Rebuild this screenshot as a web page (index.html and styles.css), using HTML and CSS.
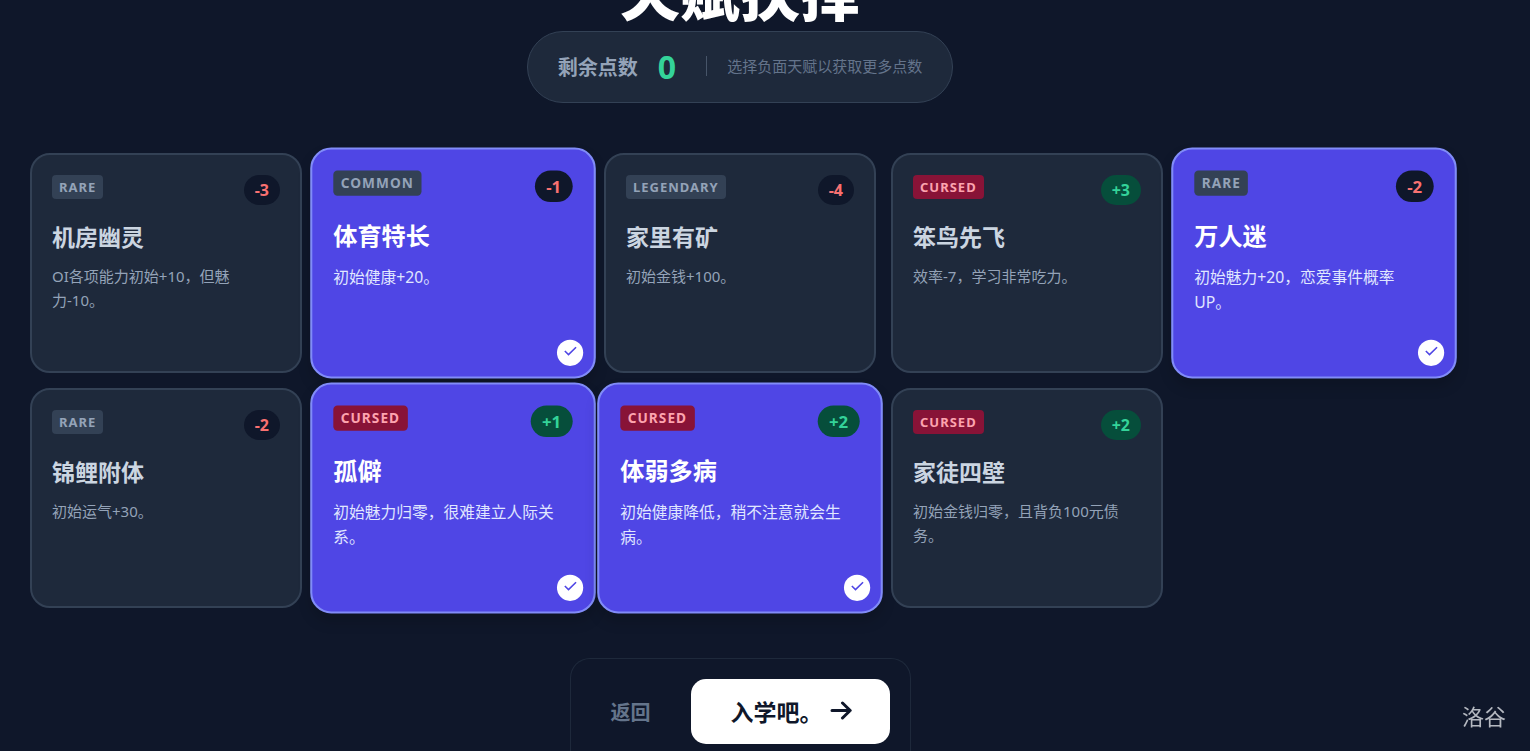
FILE: index.html
```
<!DOCTYPE html>
<html lang="zh-CN">
<head>
    <meta charset="UTF-8">
    <title>天赋抉择</title>
    <link rel="stylesheet" href="styles.css">
</head>
<body>
<svg class="defs" aria-hidden="true">
    <symbol id="check" viewBox="0 0 14 14">
        <path d="M1.5 6.8 5 10.2 12.2 3.2"/>
    </symbol>
</svg>
<main class="page">
    <h1 class="title">天赋抉择</h1>
    <div class="points">
        <span class="points-label">剩余点数</span>
        <span class="points-num">0</span>
        <span class="points-tip">选择负面天赋以获取更多点数</span>
    </div>
    <div class="talents">
        <button type="button" class="card">
            <span class="card-top"><span class="tag">RARE</span><span class="cost">-3</span></span>
            <span class="name">机房幽灵</span>
            <span class="desc">OI各项能力初始+10，但魅力-10。</span>
        </button>
        <button type="button" class="card selected" aria-pressed="true">
            <span class="card-top"><span class="tag">COMMON</span><span class="cost">-1</span></span>
            <span class="name">体育特长</span>
            <span class="desc">初始健康+20。</span>
            <span class="tick"><svg><use href="#check"/></svg></span>
        </button>
        <button type="button" class="card">
            <span class="card-top"><span class="tag">LEGENDARY</span><span class="cost">-4</span></span>
            <span class="name">家里有矿</span>
            <span class="desc">初始金钱+100。</span>
        </button>
        <button type="button" class="card">
            <span class="card-top"><span class="tag cursed">CURSED</span><span class="cost plus">+3</span></span>
            <span class="name">笨鸟先飞</span>
            <span class="desc">效率-7，学习非常吃力。</span>
        </button>
        <button type="button" class="card selected" aria-pressed="true">
            <span class="card-top"><span class="tag">RARE</span><span class="cost">-2</span></span>
            <span class="name">万人迷</span>
            <span class="desc">初始魅力+20，恋爱事件概率UP。</span>
            <span class="tick"><svg><use href="#check"/></svg></span>
        </button>
        <button type="button" class="card">
            <span class="card-top"><span class="tag">RARE</span><span class="cost">-2</span></span>
            <span class="name">锦鲤附体</span>
            <span class="desc">初始运气+30。</span>
        </button>
        <button type="button" class="card selected" aria-pressed="true">
            <span class="card-top"><span class="tag cursed">CURSED</span><span class="cost plus">+1</span></span>
            <span class="name">孤僻</span>
            <span class="desc">初始魅力归零，很难建立人际关系。</span>
            <span class="tick"><svg><use href="#check"/></svg></span>
        </button>
        <button type="button" class="card selected" aria-pressed="true">
            <span class="card-top"><span class="tag cursed">CURSED</span><span class="cost plus">+2</span></span>
            <span class="name">体弱多病</span>
            <span class="desc">初始健康降低，稍不注意就会生病。</span>
            <span class="tick"><svg><use href="#check"/></svg></span>
        </button>
        <button type="button" class="card">
            <span class="card-top"><span class="tag cursed">CURSED</span><span class="cost plus">+2</span></span>
            <span class="name">家徒四壁</span>
            <span class="desc">初始金钱归零，且背负100元债务。</span>
        </button>
    </div>
    <div class="actions">
        <button type="button" class="back">返回</button>
        <button type="button" class="start">
            <span>入学吧。</span>
            <svg class="arrow" viewBox="0 0 22 20"><path d="M2 9.5H20M12.5 2l7.7 7.5-7.7 7.5"/></svg>
        </button>
    </div>
</main>
<div class="watermark">洛谷</div>
</body>
</html>
```
FILE: styles.css
```
*{
    margin: 0;
    padding: 0;
    box-sizing: border-box;
}
body{
    background: #0f172a;
    color: #cbd5e1;
    font-family: "Noto Sans", "Noto Sans CJK SC", sans-serif;
    font-size: 15px;
    overflow: hidden;
}
button{
    font: inherit;
    color: inherit;
    border: none;
    background: none;
    cursor: pointer;
}
.defs{
    display: none;
}
.page{
    display: flex;
    flex-direction: column;
    align-items: center;
    padding: 0 80px 0 30px;
}
/* page is scrolled a little past the heading */
.title{
    margin-top: -40px;
    padding-bottom: 5px;
    line-height: 66px;
    font-size: 60px;
    font-weight: 900;
    color: #fff;
}
.points{
    display: flex;
    align-items: center;
    height: 72px;
    padding: 0 30px 2px;
    border: 1px solid #334155;
    border-radius: 36px;
    background: #1e293b;
}
.points-label{
    font-size: 20px;
    font-weight: 700;
    color: #94a3b8;
}
.points-num{
    margin: 0 30px 0 20px;
    font-size: 32px;
    font-weight: 700;
    color: #34d399;
}
.points-tip{
    padding-left: 20px;
    border-left: 1px solid #475569;
    line-height: 20px;
    color: #64748b;
}
.talents{
    display: grid;
    grid-template-columns: repeat(5, 1fr);
    gap: 15px;
    width: 100%;
    margin: 50px 0;
}
.card{
    position: relative;
    display: flex;
    flex-direction: column;
    min-height: 220px;
    padding: 20px;
    border: 2px solid #334155;
    border-radius: 20px;
    background: #1e293b;
    text-align: left;
}
.card.selected{
    transform: scale(1.05);
    border-color: #818cf8;
    background: #4f46e5;
    box-shadow: 0 8px 12px rgba(0, 0, 0, .15);
}
.card-top{
    display: flex;
    align-items: flex-start;
    justify-content: space-between;
    margin-bottom: 15px;
}
.tag{
    padding: 0 7px;
    border-radius: 4px;
    background: #334155;
    line-height: 24px;
    font-size: 13px;
    font-weight: 700;
    letter-spacing: 1px;
    color: #94a3b8;
}
.tag.cursed{
    background: #881337;
    color: #fda4af;
}
.cost{
    padding: 0 11px;
    border-radius: 15px;
    background: #0f172a;
    line-height: 30px;
    font-size: 16px;
    font-weight: 700;
    color: #f87171;
}
.cost.plus{
    background: #064e3b;
    color: #34d399;
}
.name{
    margin-bottom: 10px;
    line-height: 34px;
    font-size: 23px;
    font-weight: 700;
}
.desc{
    padding-right: 8px;
    line-height: 24px;
    color: #94a3b8;
}
.selected .name{
    color: #fff;
}
.selected .desc{
    color: #e0e7ff;
}
.tick{
    position: absolute;
    right: 10px;
    bottom: 10px;
    display: flex;
    justify-content: center;
    width: 25px;
    height: 25px;
    padding-top: 4px;
    border-radius: 50%;
    background: #fff;
}
.tick svg{
    width: 14px;
    height: 14px;
    fill: none;
    stroke: #4f46e5;
    stroke-width: 1.5;
}
.actions{
    display: flex;
    align-items: center;
    padding: 20px 20px 7px;
    border: 1px solid #1e293b;
    border-bottom: none;
    border-radius: 20px 20px 0 0;
}
.back{
    margin-right: 20px;
    padding: 0 20px;
    font-size: 20px;
    font-weight: 700;
    color: #64748b;
}
.start{
    display: flex;
    align-items: center;
    gap: 7px;
    height: 65px;
    padding: 0 38px 2px 40px;
    border-radius: 15px;
    background: #fff;
    font-size: 23px;
    font-weight: 700;
    color: #0f172a;
}
.arrow{
    width: 22px;
    height: 20px;
    fill: none;
    stroke: #0f172a;
    stroke-width: 3;
    stroke-linecap: round;
    stroke-linejoin: round;
}
.watermark{
    position: fixed;
    right: 24px;
    bottom: 20px;
    font-size: 22px;
    color: #b4b8c0;
}
```
